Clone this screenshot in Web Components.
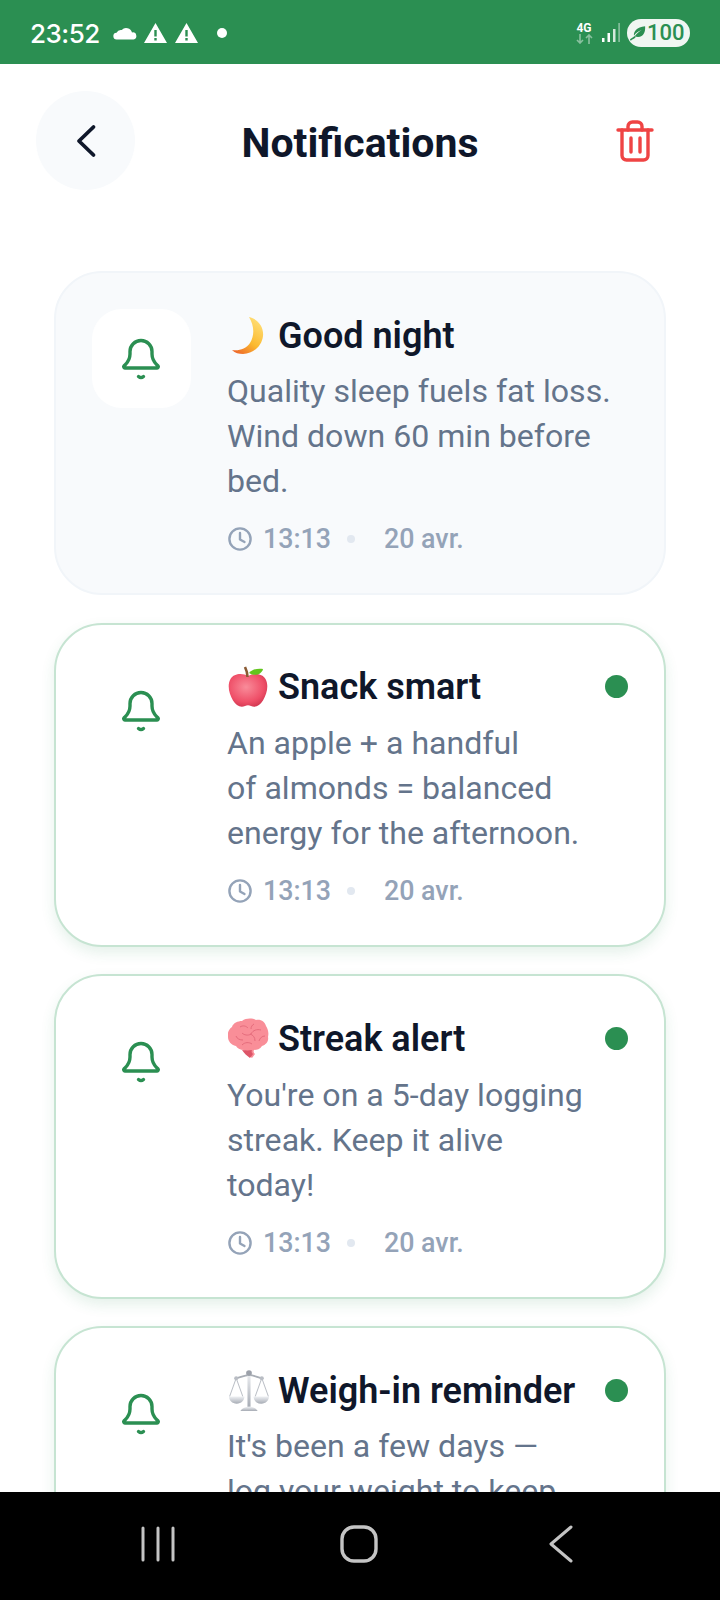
<!DOCTYPE html>
<html lang="en">
<head>
<meta charset="utf-8">
<title>Notifications</title>
<style>
    html, body {
        margin: 0;
        height: 1600px;
        overflow: hidden;
        background: #fff;
        font-family: Roboto, "Liberation Sans", sans-serif;
    }
    #app {
        display: flex;
        flex-direction: column;
        height: 1600px;
    }
</style>
</head>
<body>
<div id="app">
    <status-bar></status-bar>
    <app-header>Notifications</app-header>
    <notif-list>
        <notif-card read>
            <emoji-icon slot="emoji" name="moon"></emoji-icon>
            <span slot="title">Good night</span>
            Quality sleep fuels fat loss.<br>Wind down 60 min before<br>bed.
            <span slot="time">13:13</span>
            <span slot="date">20 avr.</span>
        </notif-card>
        <notif-card>
            <emoji-icon slot="emoji" name="apple"></emoji-icon>
            <span slot="title">Snack smart</span>
            An apple + a handful<br>of almonds = balanced<br>energy for the afternoon.
            <span slot="time">13:13</span>
            <span slot="date">20 avr.</span>
        </notif-card>
        <notif-card>
            <emoji-icon slot="emoji" name="brain"></emoji-icon>
            <span slot="title">Streak alert</span>
            You're on a 5-day logging<br>streak. Keep it alive<br>today!
            <span slot="time">13:13</span>
            <span slot="date">20 avr.</span>
        </notif-card>
        <notif-card>
            <emoji-icon slot="emoji" name="scales"></emoji-icon>
            <span slot="title">Weigh-in reminder</span>
            It's been a few days —<br>log your weight to keep<br>your trend accurate.
            <span slot="time">13:13</span>
            <span slot="date">20 avr.</span>
        </notif-card>
    </notif-list>
    <nav-keys></nav-keys>
</div>

<script>
class StatusBar extends HTMLElement {
    constructor() {
        super();
        this._shadowDom = this.attachShadow({mode: 'open'});
    }

    connectedCallback() {
        this._shadowDom.innerHTML = `
        <style>
        :host {
            display: flex;
            flex: none;
            align-items: center;
            height: 64px;
            padding: 2px 30px 0 30px;
            box-sizing: border-box;
            background: #2b8f52;
            color: #fff;
            font-family: Inter, Roboto, sans-serif;
        }
        .time { font-size: 26px; font-weight: 500; letter-spacing: -0.5px; margin-right: 13px; }
        svg { display: block; flex: none; }
        .tri { margin-right: 8px; }
        .spacer { flex: 1; }
        .net { display: flex; flex-direction: column; align-items: center; width: 18px; margin-right: 9px; }
        .net b { font: 700 12px/12px Roboto, sans-serif; }
        .pill {
            display: flex;
            align-items: center;
            height: 28px;
            width: 63px;
            box-sizing: border-box;
            padding-left: 3px;
            margin-left: 7px;
            border-radius: 14px;
            background: #f0f6f2;
            color: #2b8f52;
            font: 500 22px/28px Roboto, sans-serif;
        }
        </style>
        <span class="time">23:52</span>
        <svg width="24" height="14" viewBox="0 0 24 14" style="margin-right:7px"><path fill="#fff" d="M4 13.500a3.400 3.400 0 0 1-.5-6.800A5 5 0 0 1 8.700 4 6 6 0 0 1 19 6.500 3.500 3.500 0 0 1 20.500 13.500Z"/></svg>
        <svg class="tri" width="23" height="20" viewBox="0 0 23 20"><path fill="#fff" fill-rule="evenodd" d="M11.500 0 23 20H0ZM10.300 7v6.500h2.400V7ZM10.300 15v2.500h2.400V15Z"/></svg>
        <svg class="tri" width="23" height="20" viewBox="0 0 23 20"><path fill="#fff" fill-rule="evenodd" d="M11.500 0 23 20H0ZM10.300 7v6.500h2.400V7ZM10.300 15v2.500h2.400V15Z"/></svg>
        <svg width="10" height="10" viewBox="0 0 10 10" style="margin-left:11px"><circle cx="5" cy="5" r="5" fill="#fff"/></svg>
        <span class="spacer"></span>
        <div class="net">
            <b>4G</b>
            <svg width="17" height="10" viewBox="0 0 17 10"><path fill="none" stroke="#fff" stroke-opacity=".45" stroke-width="1.600" d="M4 0v9M1 6l3 3 3-3M13 10V1M10 4l3-3 3 3"/></svg>
        </div>
        <svg width="18" height="20" viewBox="0 0 18 20"><path fill="#fff" d="M0 15h2.500v4H0ZM5.500 10H8v9H5.500Z"/><path fill="#fff" fill-opacity=".8" d="M11 6h2.500v13H11Z"/><path fill="#fff" fill-opacity=".45" d="M16.300 0h1.600v19h-1.600Z"/></svg>
        <div class="pill">
            <svg width="16" height="16" viewBox="0 0 18 18" style="margin-right:1px"><path fill="#2b8f52" d="M17 1.500c.5 6-1.500 12-8 12-1.500 0-2.600-.4-3.400-1 2-3 4.500-5 7.400-6.500-3.500 1-6.500 3.300-8.500 6C3.700 8 7.500 2.200 17 1.500Z"/><path fill="none" stroke="#2b8f52" stroke-width="1.800" stroke-linecap="round" d="M1 16.500c1.300-1 2.700-1.700 4.500-3.200"/></svg>
            <span>100</span>
        </div>
        `;
    }
}

class AppHeader extends HTMLElement {
    constructor() {
        super();
        this._shadowDom = this.attachShadow({mode: 'open'});
    }

    connectedCallback() {
        this._shadowDom.innerHTML = `
        <style>
        :host {
            display: grid;
            grid-template-columns: 99px 1fr 99px;
            align-items: center;
            flex: none;
            padding: 27px 36px 81px 36px;
        }
        .back {
            display: flex;
            align-items: center;
            justify-content: center;
            width: 99px;
            height: 99px;
            border-radius: 50%;
            background: #f8fafc;
        }
        h1 {
            margin: 4px 0 0 0;
            text-align: center;
            color: #0f172a;
            font: 700 41px/48px Roboto, sans-serif;
        }
        .del { display: flex; justify-content: flex-end; padding-right: 30px; }
        svg { display: block; }
        </style>
        <div class="back">
            <svg width="24" height="36" viewBox="0 0 24 36"><path d="M19.500 4 5 18l14.500 14" fill="none" stroke="#0f172a" stroke-width="3.800" stroke-linecap="round" stroke-linejoin="round"/></svg>
        </div>
        <h1><slot></slot></h1>
        <div class="del">
            <svg width="38" height="42" viewBox="0 0 38 42" fill="none" stroke="#ef4444" stroke-width="3.400" stroke-linecap="round" stroke-linejoin="round"><path d="M2 10h34"/><path d="M12 10V6.500A4.500 4.500 0 0 1 16.500 2h5A4.500 4.500 0 0 1 26 6.500V10"/><path d="M6 10v25.500A4.500 4.500 0 0 0 10.500 40h17a4.500 4.500 0 0 0 4.500-4.500V10"/><path d="M15 18v14M24 18v14"/></svg>
        </div>
        `;
    }
}

class NotifList extends HTMLElement {
    constructor() {
        super();
        this._shadowDom = this.attachShadow({mode: 'open'});
    }

    connectedCallback() {
        this._shadowDom.innerHTML = `
        <style>
        :host {
            display: flex;
            flex-direction: column;
            flex: 1;
            min-height: 0;
            gap: 27.4px;
            padding: 0 54px;
            overflow: hidden;
        }
        </style>
        <slot></slot>
        `;
    }
}

class NotifCard extends HTMLElement {
    constructor() {
        super();
        this._shadowDom = this.attachShadow({mode: 'open'});
    }

    connectedCallback() {
        this._shadowDom.innerHTML = `
        <style>
        :host {
            display: flex;
            flex: none;
            gap: 36px;
            padding: 35.6px 36px 35px 36px;
            box-sizing: border-box;
            height: 324.3px;
            border: 2px solid #c6e4d2;
            border-radius: 48px;
            background: #fff;
            box-shadow: 0 6px 14px rgba(43, 143, 82, 0.12);
        }
        :host([read]) {
            border-color: #f1f5f9;
            background: #f8fafc;
            box-shadow: none;
        }
        .badge {
            display: flex;
            align-items: center;
            justify-content: center;
            flex: none;
            width: 99px;
            height: 99px;
            border-radius: 30px;
            background: transparent;
        }
        :host([read]) .badge { background: #fff; }
        .badge svg { display: block; margin: 2px 1px 0 0; }
        .body { flex: 1; min-width: 0; }
        .head {
            display: flex;
            align-items: center;
            height: 44px;
            margin: 5px 0 11.6px 0;
            color: #0f172a;
            font: 600 36px/44px Roboto, sans-serif;
        }
        .emoji { display: block; flex: none; width: 50px; padding-left: 1px; margin-top: 0; }
        .title { flex: 1; white-space: nowrap; }
        .dot {
            flex: none;
            width: 23px;
            height: 23px;
            margin-top: -1px;
            border-radius: 50%;
            background: #2b8f52;
        }
        :host([read]) .dot { display: none; }
        .desc {
            color: #64748b;
            font: 400 32.1px/45px Roboto, sans-serif;
        }
        .meta {
            display: flex;
            align-items: center;
            height: 38px;
            margin-top: 16px;
            color: #94a3b8;
            font: 500 26.8px/38px Roboto, sans-serif;
        }
        .meta svg { display: block; margin: 0 11px 0 1px; }
        .sep {
            width: 8px;
            height: 8px;
            margin: 0 29px 0 16px;
            border-radius: 50%;
            background: #e2e8f0;
        }
        </style>
        <div class="badge">
            <svg width="42" height="46" viewBox="0 0 42 46" fill="none" stroke="#2b8f52" stroke-width="3.400" stroke-linecap="round" stroke-linejoin="round"><path d="M5 32h32a1.200 1.200 0 0 0 1-2c-2.500-2.600-6-5-6-12v-2.500a11 11 0 0 0-22 0V18c0 7-3.500 9.400-6 12a1.200 1.200 0 0 0 1 2Z"/><path d="M18.500 40.500c1.500 1.300 3.500 1.300 5 0"/></svg>
        </div>
        <div class="body">
            <div class="head">
                <span class="emoji"><slot name="emoji"></slot></span>
                <span class="title"><slot name="title"></slot></span>
                <span class="dot"></span>
            </div>
            <div class="desc"><slot></slot></div>
            <div class="meta">
                <svg width="24" height="24" viewBox="0 0 24 24" fill="none" stroke="#94a3b8" stroke-width="2.400" stroke-linecap="round" stroke-linejoin="round"><circle cx="12" cy="12" r="10.600"/><path d="M12 6v6.500l4.500 2.500"/></svg>
                <slot name="time"></slot>
                <span class="sep"></span>
                <slot name="date"></slot>
            </div>
        </div>
        `;
    }
}

const EMOJI = {
    moon: `<svg width="40" height="42" viewBox="0 0 40 42"><defs><linearGradient id="m" x1="0.800" y1="0" x2="0.200" y2="1"><stop offset="0" stop-color="#ffe07a"/><stop offset=".6" stop-color="#fbb92f"/><stop offset="1" stop-color="#ee6a2a"/></linearGradient></defs><path fill="url(#m)" d="M21 2c9 2 15 10 14 19-1 10-10 18-20 18-4 0-8-1-11-4 7 1 14-1 18-7 5-8 4-18-1-26Z"/></svg>`,
    apple: `<svg width="40" height="42" viewBox="0 0 40 42"><defs><radialGradient id="a" cx=".45" cy=".4" r=".7"><stop offset="0" stop-color="#f98c9a"/><stop offset=".65" stop-color="#ef4f68"/><stop offset="1" stop-color="#c9304a"/></radialGradient></defs><path fill="url(#a)" d="M20 10c5-3 14-3 17.500 3 3.500 6 1.500 15-2.500 21.500-3 5-7.500 7.500-12 5.500-2-1-4-1-6 0-4.500 2-9 -.5-12-5.500C1 28 -1 19 2.500 13 6 7 15 7 20 10Z"/><path fill="none" stroke="#8a5a33" stroke-width="2.600" d="M17 1c1.500 3 2.500 6 2.500 10"/><path fill="#62c51e" d="M21 7c3-4 10-5 14-4-1 5-8 8-14 4Z"/></svg>`,
    brain: `<svg width="41" height="42" viewBox="0 0 41 42"><path fill="#f98e98" d="M14 3c4-3 10-3 14-1 5-1 9 2 10 6 2 3 3 7 2 11 1 4-2 8-6 9-2 3-5 4-8 4-1 2 0 3 1 4l-3 4c-3-2-6-5-8-8-4 0-7-2-8-4-5-1-8-5-8-9-1-4 1-8 4-10 1-4 6-6 10-6Z"/><path fill="#dd5568" d="M24 32c-1 2 0 3 1 4l-3 4c-3-2-6-5-8-8 4 .5 7 .5 10 0Z"/><path fill="none" stroke="#e56c7c" stroke-width="1" d="M12 9c3-2 6-1 8 1M26 6c-2 1-3 3-3 5M33 12c-4-1-8 0-10 4-3 2-7 1-9-1M8 18c1 3 4 4 7 4M37 18c-3 0-5 2-6 5M22 16c3 1 5 3 5 7M14 27c3-3 7-3 10-1"/></svg>`,
    scales: `<svg width="42" height="43" viewBox="0 0 41 42"><defs><linearGradient id="s" x1="0" y1="0" x2="0" y2="1"><stop offset="0" stop-color="#eef0f3"/><stop offset="1" stop-color="#a6abb4"/></linearGradient></defs><g fill="none" stroke="#bcc0c7" stroke-width="1"><path d="M8 8 1.500 26M8 8l6.500 18M33 8l-6.500 18M33 8l6.500 18"/></g><path fill="none" stroke="#a9aeb6" stroke-width="1.800" d="M7 8c4 0 8-3 13.500-3S30 8 34 8"/><circle cx="8" cy="8" r="2" fill="#b9bdc4"/><circle cx="33" cy="8" r="2" fill="#b9bdc4"/><path fill="url(#s)" d="M19 3h3v33h-3Z"/><circle cx="20.500" cy="3" r="2.800" fill="#9ca1aa"/><path fill="url(#s)" d="M12 40c2-3 5-4 8.500-4s6.500 1 8.500 4Z"/><path fill="url(#s)" d="M1 26h15c0 4-3 7-7.500 7S1 30 1 26ZM25 26h15c0 4-3 7-7.500 7S25 30 25 26Z"/></svg>`
};

class EmojiIcon extends HTMLElement {
    constructor() {
        super();
        this._shadowDom = this.attachShadow({mode: 'open'});
    }

    connectedCallback() {
        this._shadowDom.innerHTML = `
        <style>
        :host { display: block; width: 41px; height: 42px; }
        svg { display: block; }
        </style>
        ${EMOJI[this.getAttribute('name')]}
        `;
    }
}

class NavKeys extends HTMLElement {
    constructor() {
        super();
        this._shadowDom = this.attachShadow({mode: 'open'});
    }

    connectedCallback() {
        this._shadowDom.innerHTML = `
        <style>
        :host {
            display: flex;
            flex: none;
            align-items: center;
            height: 108px;
            padding: 0 0 4px 140px;
            box-sizing: border-box;
            background: #000;
        }
        svg { display: block; flex: none; }
        .home { margin-left: 164px; }
        .prev { margin-left: 171px; }
        </style>
        <svg width="36" height="36" viewBox="0 0 36 36" stroke="#c4c4c4" stroke-width="3" stroke-linecap="round"><path d="M3 2v32M18 2v32M33 2v32"/></svg>
        <svg class="home" width="38" height="38" viewBox="0 0 38 38" fill="none" stroke="#c4c4c4" stroke-width="3.400"><rect x="2" y="2" width="34" height="34" rx="12"/></svg>
        <svg class="prev" width="24" height="38" viewBox="0 0 24 38" fill="none" stroke="#c4c4c4" stroke-width="3" stroke-linecap="round" stroke-linejoin="round"><path d="M22 2 2 19l20 17"/></svg>
        `;
    }
}

customElements.define('status-bar', StatusBar);
customElements.define('app-header', AppHeader);
customElements.define('notif-list', NotifList);
customElements.define('notif-card', NotifCard);
customElements.define('emoji-icon', EmojiIcon);
customElements.define('nav-keys', NavKeys);
</script>
</body>
</html>
